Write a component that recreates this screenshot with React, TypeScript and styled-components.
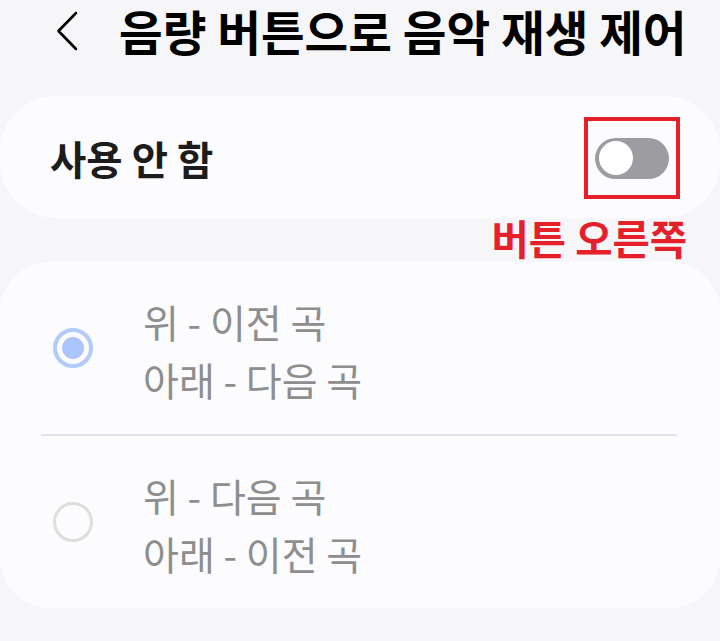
import styled, { createGlobalStyle } from "styled-components";

const GlobalStyle = createGlobalStyle`
  html, body {
    margin: 0;
    padding: 0;
    background-color: #f6f6f8;
  }
  body {
    font-family: "Noto Sans CJK KR", "Noto Sans", sans-serif;
  }
`;

const Page = styled.div`
  width: 720px;
  height: 641px;
  overflow: hidden;
  background-color: #f6f6f8;
`;

const Header = styled.div`
  display: flex;
  align-items: center;
  height: 62px;
  padding-left: 56px;
  gap: 41px;
`;

const Title = styled.h1`
  margin: 0;
  font-size: 47.5px;
  font-weight: 700;
  line-height: 1.1;
  color: #000;
  white-space: nowrap;
`;

const Card = styled.div<{ $radius: number }>`
  background-color: #fcfcfe;
  border-radius: ${(p) => p.$radius}px;
`;

const SwitchCard = styled(Card)`
  margin-top: 34px;
  height: 122px;
  display: flex;
  align-items: center;
  justify-content: space-between;
  padding: 0 40px 0 50px;
`;

const SwitchLabel = styled.span`
  font-size: 39.5px;
  font-weight: 700;
  color: #1c1c1c;
`;

const Highlight = styled.div`
  box-sizing: border-box;
  width: 96px;
  height: 82px;
  border: 4px solid #e5202a;
  display: flex;
  align-items: center;
  justify-content: center;
  margin-top: 2px;
`;

const Track = styled.div`
  box-sizing: border-box;
  width: 74px;
  height: 41px;
  border-radius: 21px;
  background-color: #9d9da1;
  padding: 4px;
  display: flex;
  align-items: center;
`;

const Thumb = styled.div`
  width: 34px;
  height: 34px;
  border-radius: 50%;
  background-color: #ffffff;
`;

const Caption = styled.div`
  height: 44px;
  line-height: 40px;
  text-align: right;
  padding-right: 33px;
  font-size: 40.5px;
  font-weight: 700;
  color: #e5202a;
`;

const OptionsCard = styled(Card)`
  display: flex;
  flex-direction: column;
`;

const Option = styled.div`
  height: 172px;
  display: flex;
  align-items: center;
  padding-left: 53px;
  gap: 50px;
`;

const Radio = styled.div<{ $checked?: boolean }>`
  box-sizing: border-box;
  width: 40px;
  height: 40px;
  border-radius: 50%;
  border: ${(p) => (p.$checked ? "4px solid #b3cbf7" : "3px solid #dedede")};
  display: flex;
  align-items: center;
  justify-content: center;
`;

const Dot = styled.div`
  width: 22px;
  height: 22px;
  border-radius: 50%;
  background-color: #abc6fb;
`;

const Lines = styled.div`
  display: flex;
  flex-direction: column;
  padding-top: 3px;
`;

const Line = styled.span`
  font-size: 39px;
  line-height: 58px;
  color: #8e8e8e;
`;

const Divider = styled.div`
  height: 2px;
  margin: 0 43px 0 41px;
  background-color: #e4e4e6;
`;

const BackIcon = () => (
  <svg width="22" height="40" viewBox="0 0 22 40" fill="none">
    <path
      d="M20 2 L2.5 20 L20 38"
      stroke="#000"
      strokeWidth="2.6"
      strokeLinecap="round"
      strokeLinejoin="round"
    />
  </svg>
);

const options = [
  { checked: true, lines: ["위 - 이전 곡", "아래 - 다음 곡"] },
  { checked: false, lines: ["위 - 다음 곡", "아래 - 이전 곡"] },
];

export default function App() {
  return (
    <Page>
      <GlobalStyle />
      <Header>
        <BackIcon />
        <Title>음량 버튼으로 음악 재생 제어</Title>
      </Header>
      <SwitchCard $radius={56}>
        <SwitchLabel>사용 안 함</SwitchLabel>
        <Highlight>
          <Track>
            <Thumb />
          </Track>
        </Highlight>
      </SwitchCard>
      <Caption>버튼 오른쪽</Caption>
      <OptionsCard $radius={50}>
        {options.map((o, i) => (
          <div key={i}>
            {i > 0 && <Divider />}
            <Option>
              <Radio $checked={o.checked}>{o.checked && <Dot />}</Radio>
              <Lines>
                {o.lines.map((l) => (
                  <Line key={l}>{l}</Line>
                ))}
              </Lines>
            </Option>
          </div>
        ))}
      </OptionsCard>
    </Page>
  );
}
